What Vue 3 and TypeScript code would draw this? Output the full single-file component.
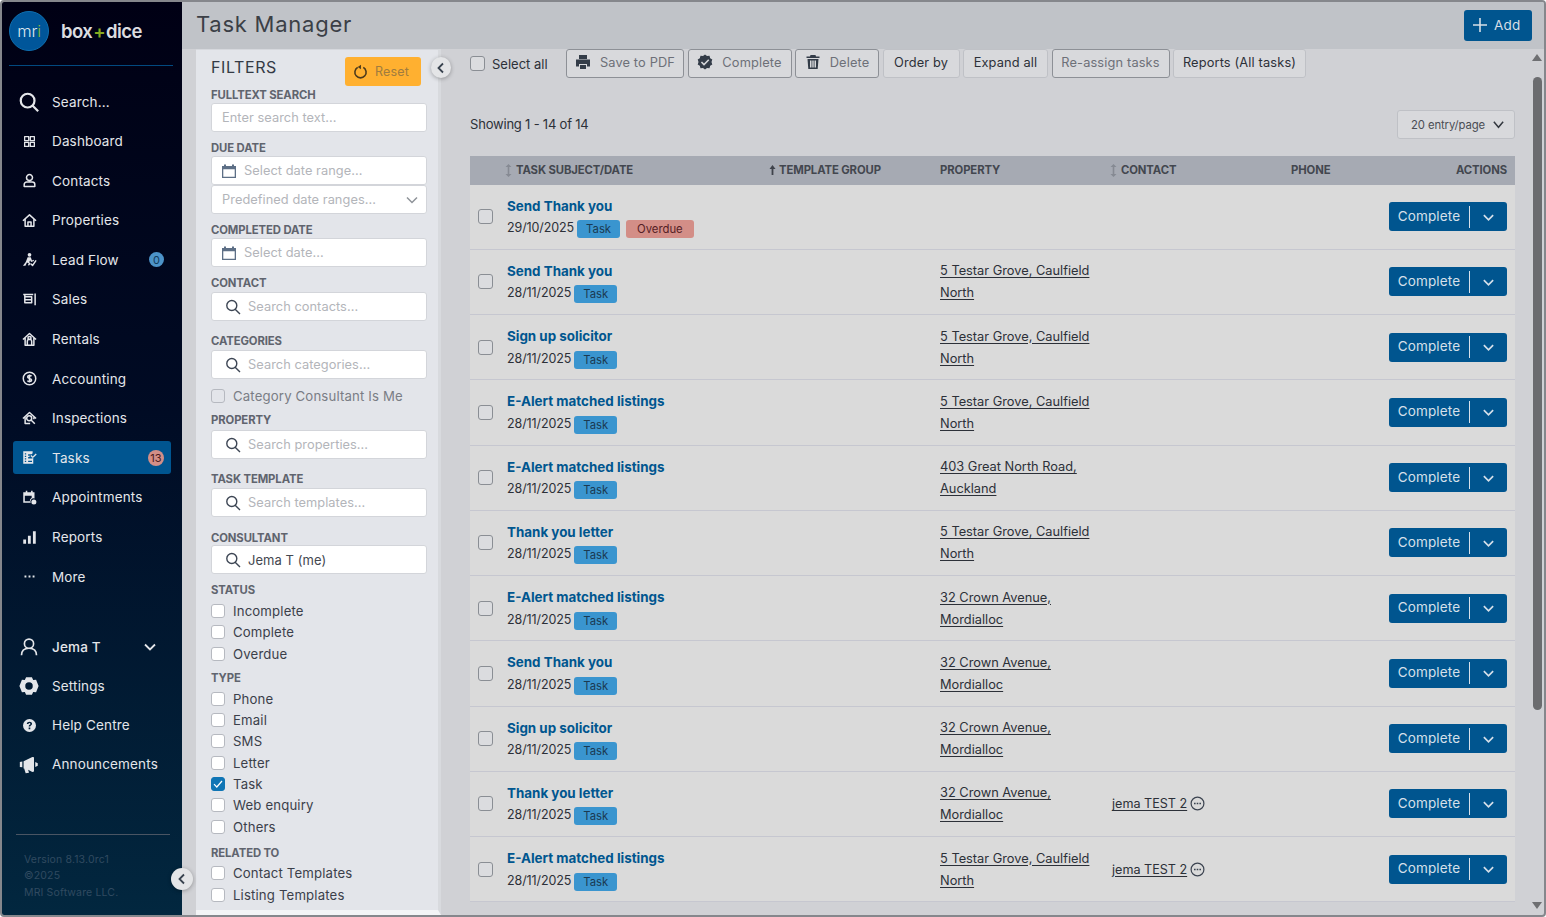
<template>
  <div class="window">
    <aside class="side">
      <div class="brand">
        <span class="mri"><span>m</span><span>r</span><span class="mri-i">i</span></span>
        <span class="word">box<b>+</b>dice</span>
      </div>
      <nav class="nav">
        <a v-for="n in navMain" :key="n.label" class="nav-item" :class="{ active: n.label === 'Tasks' }">
          <span class="nav-ico">
            <svg :width="n.size || 15" :height="n.size || 15" viewBox="0 0 24 24">
              <path v-if="n.fill" :d="n.fill" fill="currentColor" fill-rule="evenodd" />
              <path v-if="n.line" :d="n.line" fill="none" stroke="currentColor" stroke-width="2.4" stroke-linejoin="round" />
            </svg>
          </span>
          <span class="nav-label">{{ n.label }}</span>
          <span v-if="n.badge" class="nav-badge" :class="n.badgeClass">{{ n.badge }}</span>
        </a>
      </nav>
      <nav class="nav nav-low">
        <a v-for="n in navLow" :key="n.label" class="nav-item" :class="{ person: n.label === 'Jema T' }">
          <span class="nav-ico">
            <svg :width="n.size || 15" :height="n.size || 15" viewBox="0 0 24 24">
              <path v-if="n.fill" :d="n.fill" fill="currentColor" fill-rule="evenodd" />
              <path v-if="n.line" :d="n.line" fill="none" stroke="currentColor" stroke-width="2" stroke-linejoin="round" />
            </svg>
          </span>
          <span class="nav-label">{{ n.label }}</span>
          <svg v-if="n.label === 'Jema T'" class="nav-caret" width="14" height="14" viewBox="0 0 14 14">
            <path d="M2 4.5 7 9.5l5-5" fill="none" stroke="currentColor" stroke-width="1.8" />
          </svg>
        </a>
      </nav>
      <div class="side-foot">
        <div class="foot-line">Version 8.13.0rc1</div>
        <div class="foot-line">©2025</div>
        <div class="foot-line">MRI Software LLC.</div>
      </div>
    </aside>

    <button class="round-btn side-toggle" aria-label="Collapse menu">
      <svg width="12" height="12" viewBox="0 0 12 12"><path d="M8 1.5 3.5 6 8 10.5" fill="none" stroke="#39434f" stroke-width="1.8" /></svg>
    </button>

    <div class="main">
      <header class="top">
        <h1>Task Manager</h1>
        <button class="add">
          <svg width="16" height="16" viewBox="0 0 16 16"><path d="M8 1v14M1 8h14" stroke="currentColor" stroke-width="1.6" /></svg>
          Add
        </button>
      </header>

      <div class="body">
        <section class="filters">
          <div class="f-head">
            <h2>FILTERS</h2>
            <button class="reset">
              <svg width="15" height="15" viewBox="0 0 16 16">
                <path d="M5 3.6a6 6 0 1 0 6 0" fill="none" stroke="#4c3a1c" stroke-width="1.7" />
                <path d="M8.6.8 5 3.3l3.4 2.3z" fill="#4c3a1c" />
              </svg>
              Reset
            </button>
          </div>

          <div class="f-label">FULLTEXT SEARCH</div>
          <div class="field"><input placeholder="Enter search text..." readonly /></div>

          <div class="f-label g9">DUE DATE</div>
          <div class="field">
            <svg class="cal" width="16" height="16" viewBox="0 0 16 16"><path :d="calIcon" fill="#5d6f86" fill-rule="evenodd" /></svg>
            <input class="has-cal" placeholder="Select date range..." readonly />
          </div>
          <div class="field sel">
            <input placeholder="Predefined date ranges..." readonly />
            <svg class="sel-caret" width="14" height="14" viewBox="0 0 14 14"><path d="M2 4.5 7 9.5l5-5" fill="none" stroke="#8f9399" stroke-width="1.5" /></svg>
          </div>

          <div class="f-label g9">COMPLETED DATE</div>
          <div class="field">
            <svg class="cal" width="16" height="16" viewBox="0 0 16 16"><path :d="calIcon" fill="#5d6f86" fill-rule="evenodd" /></svg>
            <input class="has-cal" placeholder="Select date..." readonly />
          </div>

          <div class="f-label g9 lab2">CONTACT</div>
          <div class="field">
            <svg class="mag" width="16" height="16" viewBox="0 0 16 16"><path :d="magIcon" fill="none" stroke="#3d4654" stroke-width="1.4" /></svg>
            <input class="has-mag" placeholder="Search contacts..." readonly />
          </div>

          <div class="f-label g13 lab2">CATEGORIES</div>
          <div class="field">
            <svg class="mag" width="16" height="16" viewBox="0 0 16 16"><path :d="magIcon" fill="none" stroke="#3d4654" stroke-width="1.4" /></svg>
            <input class="has-mag" placeholder="Search categories..." readonly />
          </div>
          <label class="check muted-check"><span class="box dim"></span>Category Consultant Is Me</label>

          <div class="f-label prop">PROPERTY</div>
          <div class="field">
            <svg class="mag" width="16" height="16" viewBox="0 0 16 16"><path :d="magIcon" fill="none" stroke="#3d4654" stroke-width="1.4" /></svg>
            <input class="has-mag" placeholder="Search properties..." readonly />
          </div>

          <div class="f-label g13 lab2">TASK TEMPLATE</div>
          <div class="field">
            <svg class="mag" width="16" height="16" viewBox="0 0 16 16"><path :d="magIcon" fill="none" stroke="#3d4654" stroke-width="1.4" /></svg>
            <input class="has-mag" placeholder="Search templates..." readonly />
          </div>

          <div class="f-label consult">CONSULTANT</div>
          <div class="field">
            <svg class="mag" width="16" height="16" viewBox="0 0 16 16"><path :d="magIcon" fill="none" stroke="#3d4654" stroke-width="1.4" /></svg>
            <input class="has-mag val" value="Jema T (me)" readonly />
          </div>

          <div v-for="g in checkGroups" :key="g.title" class="f-group">
            <div class="f-label">{{ g.title }}</div>
            <div class="checks">
              <label v-for="c in g.items" :key="c" class="check">
                <span class="box" :class="{ on: c === 'Task' }">
                  <svg v-if="c === 'Task'" width="12" height="12" viewBox="0 0 12 12"><path d="M2 6.2 4.8 9 10 3" fill="none" stroke="#fff" stroke-width="1.2" /></svg>
                </span>
                {{ c }}
              </label>
            </div>
          </div>
        </section>

        <button class="round-btn filter-toggle" aria-label="Collapse filters">
          <svg width="12" height="12" viewBox="0 0 12 12"><path d="M8 1.5 3.5 6 8 10.5" fill="none" stroke="#39434f" stroke-width="1.8" /></svg>
        </button>

        <section class="list">
          <div class="toolbar">
            <label class="select-all"><span class="tick"></span>Select all</label>
            <div class="tools">
              <button v-for="b in tools" :key="b.label" class="tool" :class="b.kind" :style="{ width: b.width + 'px' }">
                <svg v-if="b.icon" width="16" height="16" viewBox="0 0 16 16"><path :d="b.icon" fill="#333c48" fill-rule="evenodd" /></svg>
                {{ b.label }}
              </button>
            </div>
          </div>

          <div class="count-row">
            <span class="count">Showing 1 - 14 of 14</span>
            <div class="page-size">
              20 entry/page
              <svg width="13" height="13" viewBox="0 0 14 14"><path d="M2 4 7 10l5-6" fill="none" stroke="#33383f" stroke-width="1.6" /></svg>
            </div>
          </div>

          <div class="thead">
            <span></span>
            <span class="th"><svg class="sort" width="7" height="13" viewBox="0 0 7 13"><path d="M3.5 0 6.5 3H4.3v7h2.2l-3 3-3-3h2.2V3H.5z" fill="#868a93" /></svg>TASK SUBJECT/DATE</span>
            <span class="th"><svg class="sort up" width="7" height="10" viewBox="0 0 7 10"><path d="M3.5 0 6.5 4H4.4v6H2.6V4H.5z" fill="#3f434b" /></svg>TEMPLATE GROUP</span>
            <span class="th">PROPERTY</span>
            <span class="th"><svg class="sort" width="7" height="13" viewBox="0 0 7 13"><path d="M3.5 0 6.5 3H4.3v7h2.2l-3 3-3-3h2.2V3H.5z" fill="#868a93" /></svg>CONTACT</span>
            <span class="th">PHONE</span>
            <span class="th th-end">ACTIONS</span>
          </div>

          <div v-for="(r, i) in rows" :key="i" class="row">
            <span class="tick row-tick"></span>
            <div class="subject">
              <a class="subject-name">{{ r.subject }}</a>
              <div class="subject-date">
                {{ r.date }}
                <span class="tag task">Task</span>
                <span v-if="r.overdue" class="tag overdue">Overdue</span>
              </div>
            </div>
            <span></span>
            <div class="property">
              <a>{{ r.addr1 }}</a>
              <a>{{ r.addr2 }}</a>
            </div>
            <div class="contact">
              <template v-if="r.contact">
                <a>{{ r.contact }}</a>
                <svg width="15" height="15" viewBox="0 0 15 15">
                  <circle cx="7.5" cy="7.5" r="6.4" fill="none" stroke="#3b4350" stroke-width="1.2" />
                  <path d="M4 6.7h1.6v1.6H4zM6.7 6.7h1.6v1.6H6.7zM9.4 6.7H11v1.6H9.4z" fill="#3b4350" />
                </svg>
              </template>
            </div>
            <span></span>
            <div class="action">
              <button class="complete">
                <span class="complete-text">Complete</span>
                <span class="complete-caret">
                  <svg width="13" height="13" viewBox="0 0 14 14"><path d="M2 4.5 7 9.5l5-5" fill="none" stroke="currentColor" stroke-width="1.8" /></svg>
                </span>
              </button>
            </div>
          </div>
        </section>

        <div class="scroll">
          <svg width="10" height="7" viewBox="0 0 10 7"><path d="M5 0l5 7H0z" fill="#6e6f72" /></svg>
          <div class="scroll-thumb"></div>
          <svg width="10" height="7" viewBox="0 0 10 7"><path d="M5 7 0 0h10z" fill="#6e6f72" /></svg>
        </div>
      </div>
    </div>
  </div>
</template>

<script setup lang="ts">
interface NavEntry {
  label: string
  fill?: string
  line?: string
  size?: number
  badge?: string
  badgeClass?: string
}

interface Task {
  subject: string
  date: string
  overdue?: boolean
  addr1?: string
  addr2?: string
  contact?: string
}

const calIcon = 'M3 1.5h2V3h6V1.5h2V3h2v12H1V3h2zM2.3 6.2v7.5h11.4V6.2z'
const magIcon = 'M6.8 1.5a5 5 0 1 1 0 10 5 5 0 0 1 0-10zM10.4 10.4 15 15'

const navMain: NavEntry[] = [
  { label: 'Search...', size: 22, line: 'M10.5 3a7.5 7.5 0 1 1 0 15 7.5 7.5 0 0 1 0-15zM16 16l6 6' },
  { label: 'Dashboard', size: 13, line: 'M3 3h7.500v7.500H3zM13.500 3H21v7.500h-7.500zM3 13.500h7.500V21H3zM13.500 13.500H21V21h-7.500z' },
  { label: 'Contacts', line: 'M12 2.500a4.800 4.800 0 1 1 0 9.600 4.800 4.800 0 0 1 0-9.600zM3.500 21.500v-3a4 4 0 0 1 4-4h9a4 4 0 0 1 4 4v3z' },
  { label: 'Properties', line: 'M1.500 12.500 12 3l10.500 9.500M5 10v11h14V10M9.500 21v-6.500h5V21' },
  { label: 'Lead Flow', fill: 'M12 1.500a3 3 0 1 1 0 6 3 3 0 0 1 0-6zM9 8.500h5l2 5 3-1v2l-4.500 1.600L13 13l-1.500 3.500 2.500 2-3 3.500-1.500-1.500 1.500-2-3-1.800L5.500 22H1.500l4.500-6z', line: 'M14 19l3 2.500 5.500-8' },
  { label: 'Sales', line: 'M2 4h16M4.500 4v3.500M4.500 7.500h11V17h-11zM21 2.500V21M4.500 12.500h11' },
  { label: 'Rentals', line: 'M1.500 12 12 2.500 22.500 12M5 9.500V21h14V9.500M8.500 21v-6a3.500 3.500 0 0 1 7 0v6M12 7a2.500 2.500 0 1 1 0 5 2.500 2.500 0 0 1 0-5z' },
  { label: 'Accounting', line: 'M12 2a10 10 0 1 1 0 20 10 10 0 0 1 0-20zM15.300 8.500c-.8-1-1.900-1.300-3.300-1.300-1.800 0-3 .9-3 2.300 0 3.200 6.300 1.700 6.300 5 0 1.400-1.300 2.300-3.300 2.300-1.500 0-2.700-.5-3.400-1.500M12 5.500v13' },
  { label: 'Inspections', line: 'M1.500 12 12 2.500 22.500 12M5 10v10h8M19 10v3M11.500 7.500a4 4 0 1 1 0 8 4 4 0 0 1 0-8zM14.500 14.500l6 6' },
  { label: 'Tasks', fill: 'M2 2h15v3.200l-1.500 1.500H9.800V9h3.600l-2.200 2.200H9.800v2.300H16l2-2V22H2zM6.700 5.300H4.500v2h2.200zM6.700 9.300H4.500v2h2.200zM6.700 13.300H4.500v2h2.200zM6.700 17.300H4.500v2h2.200zM9.800 17.300v2H16v-2zM22 5.500l1.500 1.500-6.300 6.300L13.500 9.600 15 8.100l2.200 2.200z' },
  { label: 'Appointments', fill: 'M6 1h2.500v2.500h6V1H17v2.500h3v10a5 5 0 0 0-6 7H2V3.500h4zM4.500 9v9h8a6 6 0 0 1 3-5.800V9zM19 15a4 4 0 1 1 0 8 4 4 0 0 1 0-8z' },
  { label: 'Reports', fill: 'M2 15h4.500v7H2zM9.500 9H14v13H9.500zM17.500 2H22v20h-4.500z' },
  { label: 'More', fill: 'M4 10.500h3v3H4zM10.500 10.500h3v3h-3zM17 10.500h3v3h-3z' }
]
navMain[4].badge = '0'
navMain[4].badgeClass = 'blue'
navMain[9].badge = '13'
navMain[9].badgeClass = 'red'

const navLow: NavEntry[] = [
  { label: 'Jema T', size: 20, line: 'M12 2.500a5.500 5.500 0 1 1 0 11 5.500 5.500 0 0 1 0-11zM3 22c0-5 3-8.500 9-8.500s9 3.500 9 8.500' },
  { label: 'Settings', size: 20, fill: 'M8.500 1.500h7l1.500 3.200 3.500-.3L23.500 12l-3 7.600-3.500-.3-1.500 3.200h-7L7 19.300l-3.500.3L.500 12l3-7.600 3.500.3zM12 7.500a4.500 4.500 0 1 0 0 9 4.500 4.500 0 0 0 0-9z' },
  { label: 'Help Centre', size: 13, fill: 'M12 0a12 12 0 1 1 0 24 12 12 0 0 1 0-24zM12 5c-2.800 0-4.700 1.500-5 4h3c.2-1 .9-1.400 1.900-1.400s1.800.5 1.800 1.400c0 .8-.5 1.200-1.400 1.800-1.200.8-1.800 1.500-1.800 3.200h2.900c0-.9.3-1.200 1.300-1.900 1.200-.8 2-1.800 2-3.300C16.700 6.400 14.700 5 12 5zM10.400 15.500V19h3.100v-3.500z' },
  { label: 'Announcements', size: 20, fill: 'M1 9.500 4 9v7l-3-.5zM5.500 8.700 16 3.500l2 .5v17l-2 .5-5-2.500 1 3.500-4 .5-1.800-5.500H5.500zM19.500 9.500l3 1.500v3l-3 1.500z' }
]

const tools = [
  { label: 'Save to PDF', width: 118, kind: 'dim', icon: 'M4 1h8v4H4zM1 5.500h14v7h-3V10H4v2.500H1zM5 11h6v4H5z' },
  { label: 'Complete', width: 104, kind: 'dim', icon: 'M8 .5 10 2l2.500-.2.700 2.400 2.100 1.400L14.500 8l.8 2.400-2.100 1.400-.7 2.400L10 14 8 15.500 6 14l-2.500.2-.7-2.400L.7 10.400 1.500 8 .7 5.600l2.100-1.400.7-2.400L6 2zM11.200 5.200 7 9.400 5 7.500 3.900 8.600 7 11.700l5.300-5.400z' },
  { label: 'Delete', width: 84, kind: 'dim', icon: 'M5.500 1h5l.5 1.500H14.500V4h-13V2.500H5zM2.500 5h11l-.8 10H3.300zM5 6.500v7h1.500v-7zM7.300 6.500v7h1.400v-7zM9.500 6.500v7H11v-7z' },
  { label: 'Order by', width: 77, kind: 'plain', icon: '' },
  { label: 'Expand all', width: 85, kind: 'plain', icon: '' },
  { label: 'Re-assign tasks', width: 118, kind: 'dim', icon: '' },
  { label: 'Reports (All tasks)', width: 133, kind: 'plain', icon: '' }
]

const testar = { addr1: '5 Testar Grove, Caulfield', addr2: 'North' }
const crown = { addr1: '32 Crown Avenue,', addr2: 'Mordialloc' }

const rows: Task[] = [
  { subject: 'Send Thank you', date: '29/10/2025', overdue: true },
  { subject: 'Send Thank you', date: '28/11/2025', ...testar },
  { subject: 'Sign up solicitor', date: '28/11/2025', ...testar },
  { subject: 'E-Alert matched listings', date: '28/11/2025', ...testar },
  { subject: 'E-Alert matched listings', date: '28/11/2025', addr1: '403 Great North Road,', addr2: 'Auckland' },
  { subject: 'Thank you letter', date: '28/11/2025', ...testar },
  { subject: 'E-Alert matched listings', date: '28/11/2025', ...crown },
  { subject: 'Send Thank you', date: '28/11/2025', ...crown },
  { subject: 'Sign up solicitor', date: '28/11/2025', ...crown },
  { subject: 'Thank you letter', date: '28/11/2025', ...crown, contact: 'jema TEST 2' },
  { subject: 'E-Alert matched listings', date: '28/11/2025', ...testar, contact: 'jema TEST 2' }
]

const checkGroups = [
  { title: 'STATUS', items: ['Incomplete', 'Complete', 'Overdue'] },
  { title: 'TYPE', items: ['Phone', 'Email', 'SMS', 'Letter', 'Task', 'Web enquiry', 'Others'] },
  { title: 'RELATED TO', items: ['Contact Templates', 'Listing Templates'] }
]
</script>

<style>
html, body { margin: 0; overflow: hidden; }
</style>

<style scoped>
* { box-sizing: border-box; }
.window {
  position: relative;
  display: flex;
  width: 1546px;
  height: 917px;
  overflow: hidden;
  border: 2px solid #85878c;
  border-radius: 4px;
  background: #d0d1d5;
  font-family: Inter, "Open Sans", sans-serif;
  font-size: 13.5px;
  letter-spacing: .15px;
  color: #2c3038;
}
button { font-family: inherit; letter-spacing: inherit; cursor: pointer; }

.side {
  flex: 0 0 180px;
  display: flex;
  flex-direction: column;
  background: linear-gradient(180deg, #000014 0%, #000b24 45%, #02273f 100%);
  color: #e4e6ea;
}
.brand {
  display: flex;
  align-items: center;
  gap: 12px;
  height: 64px;
  margin: 0 9px 0 7px;
  padding-bottom: 6px;
  border-bottom: 1px solid #024a80;
}
.mri {
  display: flex;
  align-items: center;
  justify-content: center;
  flex: none;
  width: 40px;
  height: 40px;
  border-radius: 50%;
  background: #00569a;
  border: 1px solid #0e6fb0;
  font-size: 16.500px;
  font-weight: 300;
  letter-spacing: -.2px;
  color: #dfe7ee;
}
.mri-i { color: #8dbb34; }
.word { font-size: 18.500px; font-weight: 600; letter-spacing: -.6px; color: #dcdde0; white-space: nowrap; }
.word b { color: #86a91f; margin: 0 1px; font-weight: 600; }

.nav { display: flex; flex-direction: column; padding: 19px 11px 0; }
.nav-item {
  display: flex;
  align-items: center;
  flex: 0 0 33px;
  height: 33px;
  margin-bottom: 6.600px;
  padding-left: 5px;
  border-radius: 3px;
}
.nav-item.active { background: #005590; }
.nav-ico { display: flex; justify-content: center; align-items: center; width: 22px; margin-right: 12px; }
.nav-label { flex: 1; white-space: nowrap; }
.nav-badge {
  display: flex;
  align-items: center;
  justify-content: center;
  width: 16px;
  height: 16px;
  margin-right: 7px;
  border-radius: 50%;
  font-size: 11px;
  letter-spacing: 0;
}
.nav-badge.blue { background: #4c93c8; color: #123a5a; width: 15px; height: 15px; }
.nav-badge.red { background: #d38e87; color: #4a1a1c; }
.nav-low { padding-top: 31px; }
.nav-low .nav-item { margin-bottom: 6px; }
.nav-item.person .nav-label { font-weight: 500; }
.nav-caret { margin-right: 14px; }
.side-foot {
  margin: auto 12px 14px 14px;
  padding: 17px 0 0 8px;
  border-top: 1px solid #4a5563;
  font-size: 10.500px;
  letter-spacing: .15px;
  color: #304a60;
}
.foot-line { height: 16.500px; line-height: 16.500px; }

.round-btn {
  position: absolute;
  display: flex;
  align-items: center;
  justify-content: center;
  padding: 0;
  border: 0;
  border-radius: 50%;
  background: #e4e5e7;
  box-shadow: 0 1px 4px rgba(0, 0, 0, .3);
  z-index: 3;
}
.side-toggle { left: 169px; top: 866px; width: 22px; height: 22px; }
.filter-toggle { left: 429px; top: 55px; width: 20px; height: 21px; }

.main { flex: 1; min-width: 0; display: flex; flex-direction: column; }
.top {
  flex: 0 0 47px;
  display: flex;
  align-items: center;
  justify-content: space-between;
  padding: 0 12px 1px 14px;
  background: #c0c3c8;
}
.top h1 { margin: -2px 0 0; font-size: 22px; font-weight: 400; letter-spacing: .75px; color: #3b3f46; }
.add {
  display: flex;
  align-items: center;
  gap: 6px;
  width: 68px;
  height: 31px;
  padding-left: 8px;
  border: 0;
  border-radius: 3px;
  background: #00558f;
  font-size: 13.500px;
  color: #d6dee6;
}

.body { flex: 1; min-height: 0; display: flex; overflow: hidden; }

.filters {
  flex: 0 0 245px;
  margin-left: 14px;
  padding: 0 11px 0 15px;
  height: 866px;
  background: #e3e5ea;
  border-right: 3px solid #d8dade;
  border-top: 1px solid #d6d8dd;
  border-bottom: 5px solid #f3f4f6;
}
.f-head { display: flex; align-items: center; justify-content: space-between; height: 38px; padding: 5px 6px 0 0; }
.f-head h2 { margin: -9px 0 0; font-size: 16px; font-weight: 400; letter-spacing: .6px; color: #343a45; }
.reset {
  display: flex;
  align-items: center;
  gap: 7px;
  width: 76px;
  height: 29px;
  padding-left: 8px;
  border: 0;
  border-radius: 3px;
  background: #ffb030;
  font-size: 12.500px;
  color: #a07c3f;
}
.f-label {
  height: 14px;
  margin-bottom: 1px;
  font-size: 11.300px;
  line-height: 14px;
  font-weight: 700;
  letter-spacing: -.1px;
  color: #60646e;
}
.lab2 { margin-bottom: 2px; }
.g9 { margin-top: 9px; }
.g13 { margin-top: 13px; }
.prop { margin-top: 7px; margin-bottom: 3px; }
.consult { margin-top: 14px; margin-bottom: 0; }
.field {
  position: relative;
  display: flex;
  align-items: center;
  height: 29px;
  background: #fff;
  border: 1px solid #d3d5da;
  border-radius: 3px;
}
.field input {
  width: 100%;
  height: 100%;
  padding: 0 0 0 10px;
  border: 0;
  outline: 0;
  background: transparent;
  font-family: inherit;
  font-size: 12.800px;
  letter-spacing: .05px;
  color: #444850;
}
.field input::placeholder { color: #b3b5ba; opacity: 1; }
.field input.has-cal { padding-left: 7px; }
.field input.has-mag { padding-left: 7px; }
.cal { flex: none; margin-left: 9px; }
.mag { flex: none; margin-left: 13px; }
.field input.val { font-size: 13px; }
.sel-caret { position: absolute; right: 7px; top: 7px; }

.f-group { margin-top: 7px; }
.field + .f-group { margin-top: 9px; }
.f-group:last-child { margin-top: 8.500px; }
.checks { display: flex; flex-direction: column; padding-top: 2px; }
.check {
  display: flex;
  align-items: center;
  gap: 8px;
  height: 21.300px;
  font-size: 13.200px;
  color: #3b3f4a;
}
.box {
  display: flex;
  align-items: center;
  justify-content: center;
  flex: none;
  width: 14px;
  height: 14px;
  background: #fff;
  border: 1px solid #b6b9c0;
  border-radius: 3px;
}
.box.on { background: #0f75b5; border-color: #0f75b5; }
.box.dim { background: #e3e5ea; }
.muted-check { margin-top: 6px; color: #7a7d85; }

.list { flex: 0 0 1045px; margin-left: 29px; margin-right: 15px; }
.toolbar { display: flex; align-items: center; height: 29px; }
.select-all { display: flex; align-items: center; gap: 7px; width: 96px; font-size: 13px; letter-spacing: 0; }
.tick {
  display: block;
  flex: none;
  width: 15px;
  height: 15px;
  border: 1px solid #8a8e94;
  border-radius: 3px;
  background: #dbdcdf;
}
.tools { display: flex; gap: 3.500px; }
.tool {
  display: flex;
  align-items: center;
  justify-content: center;
  gap: 9px;
  height: 29px;
  padding: 0 0 3px;
  background: #d8d9dc;
  border: 1px solid #bfc1c6;
  border-radius: 3px;
  font-size: 12.800px;
  color: #2c3038;
  white-space: nowrap;
}
.tool.dim { border-color: #8d9096; color: #6d7078; }
.count-row {
  display: flex;
  align-items: center;
  justify-content: space-between;
  height: 29px;
  margin-top: 32px;
}
.count { margin-top: -2px; font-size: 13px; letter-spacing: -.2px; }
.page-size {
  display: flex;
  align-items: center;
  justify-content: space-between;
  width: 118px;
  height: 29px;
  padding: 0 9px 0 13px;
  background: #d8d9dc;
  border: 1px solid #bfc1c6;
  border-radius: 3px;
  font-size: 11.300px;
  letter-spacing: -.1px;
  color: #4a4d54;
}
.thead, .row {
  display: grid;
  grid-template-columns: 37px 264px 169px 172px 179px 1fr 118px;
  align-items: center;
}
.thead {
  height: 28.500px;
  margin-top: 17px;
  padding-right: 8px;
  background: #a6aab3;
}
.th {
  display: flex;
  align-items: center;
  font-size: 11.300px;
  font-weight: 700;
  letter-spacing: -.1px;
  color: #43474f;
  white-space: nowrap;
}
.th-end { justify-content: flex-end; }
.sort { flex: none; margin-right: 4px; margin-left: -2px; }
.sort.up { margin-right: 3px; }
.row {
  height: 65.250px;
  padding-right: 8px;
  background: #dadada;
  border-bottom: 1px solid #c6c7d0;
}
.row-tick { margin-left: 8px; }
.subject { align-self: start; padding-top: 11px; }
.subject-name { display: block; height: 20px; line-height: 20px; font-size: 13.400px; font-weight: 700; color: #00568f; letter-spacing: 0; white-space: nowrap; }
.subject-date { display: flex; align-items: center; height: 24px; gap: 3px; font-size: 12.500px; letter-spacing: -.1px; }
.tag {
  display: inline-block;
  height: 18px;
  line-height: 18px;
  padding: 0 9px;
  border-radius: 3px;
  font-size: 11.300px;
  letter-spacing: 0;
  margin-top: 3px;
}
.tag.task { background: #3a95cf; color: #1b3a52; }
.tag.overdue { background: #d38e87; color: #552025; padding: 0 11px; margin-left: 3px; }
.property { align-self: start; padding-top: 10.500px; display: flex; flex-direction: column; }
.property a { height: 22px; line-height: 22px; font-size: 12.800px; letter-spacing: 0; color: #2c3038; text-decoration: underline; text-underline-offset: 2px; white-space: nowrap; align-self: flex-start; }
.contact { display: flex; align-items: center; gap: 3px; font-size: 12.600px; letter-spacing: 0; }
.contact a { text-decoration: underline; text-underline-offset: 2px; white-space: nowrap; }
.action { display: flex; justify-content: flex-end; }
.complete {
  display: flex;
  align-items: center;
  width: 118px;
  height: 29px;
  padding: 0;
  border: 0;
  border-radius: 3px;
  background: #00558f;
  color: #d6e0ea;
  font-size: 13.500px;
}
.complete-text { width: 81px; height: 22px; line-height: 21px; text-align: center; border-right: 1px solid #d6e0ea; }
.complete-caret { flex: 1; display: flex; align-items: center; justify-content: center; padding-top: 1px; }

.scroll {
  flex: 0 0 14px;
  display: flex;
  flex-direction: column;
  align-items: center;
  padding-top: 5px;
  height: 866px;
}
.scroll-thumb { width: 9px; height: 633px; margin-top: 16px; margin-bottom: 192px; border-radius: 5px; background: #6b6c6f; }
</style>
